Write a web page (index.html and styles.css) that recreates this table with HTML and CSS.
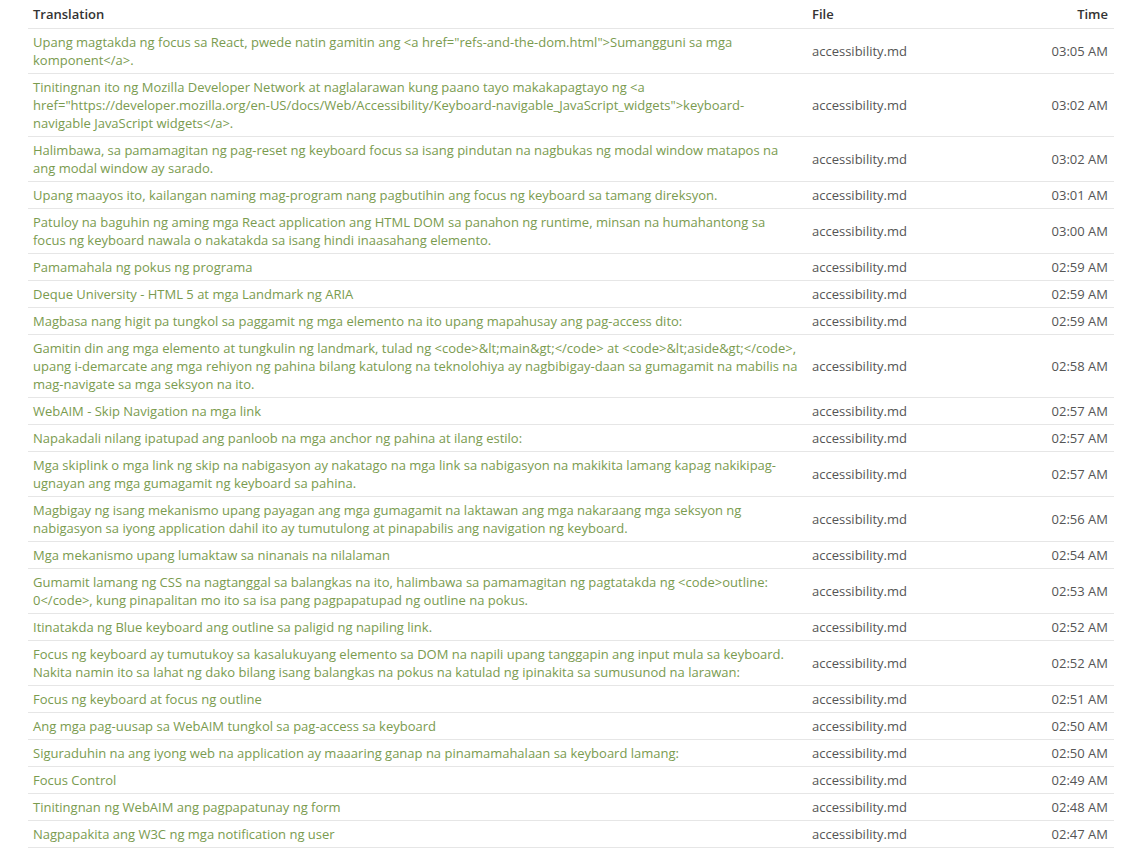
FILE: index.html
```html
<!DOCTYPE html>
<html>
<head>
<meta charset="utf-8">
<link rel="stylesheet" href="styles.css">
</head>
<body>
<table class="log">
<colgroup><col class="c-tr"><col class="c-file"><col class="c-time"></colgroup>
<thead>
<tr><th>Translation</th><th>File</th><th class="time">Time</th></tr>
</thead>
<tbody>
<tr><td class="tr">Upang magtakda ng focus sa React, pwede natin gamitin ang &lt;a href="refs-and-the-dom.html"&gt;Sumangguni sa mga komponent&lt;/a&gt;.</td><td class="file">accessibility.md</td><td class="time">03:05 AM</td></tr>
<tr><td class="tr">Tinitingnan ito ng Mozilla Developer Network at naglalarawan kung paano tayo makakapagtayo ng &lt;a href="https://developer.mozilla.org/en-US/docs/Web/Accessibility/Keyboard-navigable_JavaScript_widgets"&gt;keyboard-navigable JavaScript widgets&lt;/a&gt;.</td><td class="file">accessibility.md</td><td class="time">03:02 AM</td></tr>
<tr><td class="tr">Halimbawa, sa pamamagitan ng pag-reset ng keyboard focus sa isang pindutan na nagbukas ng modal window matapos na ang modal window ay sarado.</td><td class="file">accessibility.md</td><td class="time">03:02 AM</td></tr>
<tr><td class="tr">Upang maayos ito, kailangan naming mag-program nang pagbutihin ang focus ng keyboard sa tamang direksyon.</td><td class="file">accessibility.md</td><td class="time">03:01 AM</td></tr>
<tr><td class="tr">Patuloy na baguhin ng aming mga React application ang HTML DOM sa panahon ng runtime, minsan na humahantong sa focus ng keyboard nawala o nakatakda sa isang hindi inaasahang elemento.</td><td class="file">accessibility.md</td><td class="time">03:00 AM</td></tr>
<tr><td class="tr">Pamamahala ng pokus ng programa</td><td class="file">accessibility.md</td><td class="time">02:59 AM</td></tr>
<tr><td class="tr">Deque University - HTML 5 at mga Landmark ng ARIA</td><td class="file">accessibility.md</td><td class="time">02:59 AM</td></tr>
<tr><td class="tr">Magbasa nang higit pa tungkol sa paggamit ng mga elemento na ito upang mapahusay ang pag-access dito:</td><td class="file">accessibility.md</td><td class="time">02:59 AM</td></tr>
<tr><td class="tr">Gamitin din ang mga elemento at tungkulin ng landmark, tulad ng &lt;code&gt;&amp;lt;main&amp;gt;&lt;/code&gt; at &lt;code&gt;&amp;lt;aside&amp;gt;&lt;/code&gt;, upang i-demarcate ang mga rehiyon ng pahina bilang katulong na teknolohiya ay nagbibigay-daan sa gumagamit na mabilis na mag-navigate sa mga seksyon na ito.</td><td class="file">accessibility.md</td><td class="time">02:58 AM</td></tr>
<tr><td class="tr">WebAIM - Skip Navigation na mga link</td><td class="file">accessibility.md</td><td class="time">02:57 AM</td></tr>
<tr><td class="tr">Napakadali nilang ipatupad ang panloob na mga anchor ng pahina at ilang estilo:</td><td class="file">accessibility.md</td><td class="time">02:57 AM</td></tr>
<tr><td class="tr">Mga skiplink o mga link ng skip na nabigasyon ay nakatago na mga link sa nabigasyon na makikita lamang kapag nakikipag-ugnayan ang mga gumagamit ng keyboard sa pahina.</td><td class="file">accessibility.md</td><td class="time">02:57 AM</td></tr>
<tr><td class="tr">Magbigay ng isang mekanismo upang payagan ang mga gumagamit na laktawan ang mga nakaraang mga seksyon ng nabigasyon sa iyong application dahil ito ay tumutulong at pinapabilis ang navigation ng keyboard.</td><td class="file">accessibility.md</td><td class="time">02:56 AM</td></tr>
<tr><td class="tr">Mga mekanismo upang lumaktaw sa ninanais na nilalaman</td><td class="file">accessibility.md</td><td class="time">02:54 AM</td></tr>
<tr><td class="tr">Gumamit lamang ng CSS na nagtanggal sa balangkas na ito, halimbawa sa pamamagitan ng pagtatakda ng &lt;code&gt;outline: 0&lt;/code&gt;, kung pinapalitan mo ito sa isa pang pagpapatupad ng outline na pokus.</td><td class="file">accessibility.md</td><td class="time">02:53 AM</td></tr>
<tr><td class="tr">Itinatakda ng Blue keyboard ang outline sa paligid ng napiling link.</td><td class="file">accessibility.md</td><td class="time">02:52 AM</td></tr>
<tr><td class="tr">Focus ng keyboard ay tumutukoy sa kasalukuyang elemento sa DOM na napili upang tanggapin ang input mula sa keyboard. Nakita namin ito sa lahat ng dako bilang isang balangkas na pokus na katulad ng ipinakita sa sumusunod na larawan:</td><td class="file">accessibility.md</td><td class="time">02:52 AM</td></tr>
<tr><td class="tr">Focus ng keyboard at focus ng outline</td><td class="file">accessibility.md</td><td class="time">02:51 AM</td></tr>
<tr><td class="tr">Ang mga pag-uusap sa WebAIM tungkol sa pag-access sa keyboard</td><td class="file">accessibility.md</td><td class="time">02:50 AM</td></tr>
<tr><td class="tr">Siguraduhin na ang iyong web na application ay maaaring ganap na pinamamahalaan sa keyboard lamang:</td><td class="file">accessibility.md</td><td class="time">02:50 AM</td></tr>
<tr><td class="tr">Focus Control</td><td class="file">accessibility.md</td><td class="time">02:49 AM</td></tr>
<tr><td class="tr">Tinitingnan ng WebAIM ang pagpapatunay ng form</td><td class="file">accessibility.md</td><td class="time">02:48 AM</td></tr>
<tr><td class="tr">Nagpapakita ang W3C ng mga notification ng user</td><td class="file">accessibility.md</td><td class="time">02:47 AM</td></tr>
</tbody>
</table>
</body>
</html>
```

FILE: styles.css
```css
html, body {
  margin: 0;
  padding: 0;
  background: #fff;
}
body {
  font-family: "Open Sans", "Liberation Sans", sans-serif;
  font-size: 13px;
  line-height: 18px;
  color: #555;
}
.log {
  margin-left: 28px;
  width: 1086px;
  border-collapse: collapse;
  table-layout: fixed;
}
.c-tr { width: 779px; }
.c-file { width: 200px; }
.c-time { width: 107px; }
.log th {
  font-weight: 600;
  color: #333;
  text-align: left;
  padding: 5px 5px 5px;
  border-bottom: 1px solid #e6e6e6;
}
.log td {
  padding: 4px 5px;
  border-bottom: 1px solid #e6e6e6;
  vertical-align: middle;
}
.log td.tr {
  padding-right: 9px;
}
.log .time {
  text-align: right;
  padding-right: 6px;
}
.tr {
  color: #7a9b4f;
}
.file {
  color: #555;
}
```
